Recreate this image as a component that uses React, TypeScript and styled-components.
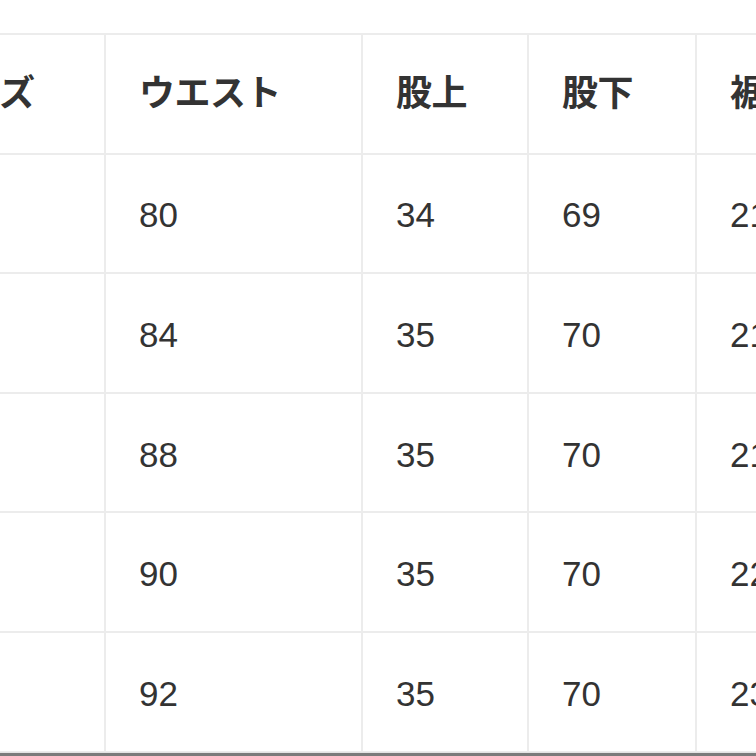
import styled, { createGlobalStyle } from "styled-components";

const GlobalStyle = createGlobalStyle`
  html, body {
    margin: 0;
    padding: 0;
    background: #ffffff;
  }
  body {
    font-family: "Liberation Sans", "Noto Sans CJK JP", sans-serif;
  }
`;

const Page = styled.div`
  width: 756px;
  height: 756px;
  overflow: hidden;
  display: flex;
  flex-direction: column;
  background: #ffffff;
`;

const Viewport = styled.div`
  flex: 1;
  overflow: hidden;
  padding-top: 33px;
`;

const Table = styled.table<{ $width: number }>`
  border-collapse: collapse;
  table-layout: fixed;
  width: ${(p) => p.$width}px;
  margin-left: -106px;
  color: #333333;
`;

const Cell = styled.td<{ $width?: number }>`
  border: 2px solid #ececec;
  height: 119.6px;
  padding: 4px 0 0 33px;
  box-sizing: border-box;
  width: ${(p) => (p.$width ? `${p.$width}px` : "auto")};
  font-size: 35px;
  font-weight: 400;
  white-space: nowrap;
  overflow: hidden;
  vertical-align: middle;
`;

const HeadCell = styled(Cell).attrs({ as: "th" })`
  text-align: left;
  font-family: "Noto Sans CJK JP", sans-serif;
  font-size: 36px;
  font-weight: 700;
  letter-spacing: -0.5px;
  padding-top: 0;
  padding-bottom: 8px;
`;

const BottomBar = styled.div`
  height: 3px;
  border-top: 1px solid #e4e4e4;
  background: #7b7b7b;
  flex-shrink: 0;
`;

const widths = [210, 257, 166, 168, 180];
const headers = ["サイズ", "ウエスト", "股上", "股下", "裾幅"];
const rows = [
  ["S", "80", "34", "69", "21"],
  ["M", "84", "35", "70", "21"],
  ["L", "88", "35", "70", "21"],
  ["XL", "90", "35", "70", "22"],
  ["XXL", "92", "35", "70", "23"],
];

export default function App() {
  const total = widths.reduce((a, b) => a + b, 0);
  return (
    <Page>
      <GlobalStyle />
      <Viewport>
        <Table $width={total}>
          <thead>
            <tr>
              {headers.map((h, i) => (
                <HeadCell key={h} $width={widths[i]}>
                  {h}
                </HeadCell>
              ))}
            </tr>
          </thead>
          <tbody>
            {rows.map((r) => (
              <tr key={r[0]}>
                {r.map((v, i) => (
                  <Cell key={i} $width={widths[i]}>
                    {i === 0 ? "" : v}
                  </Cell>
                ))}
              </tr>
            ))}
          </tbody>
        </Table>
      </Viewport>
      <BottomBar />
    </Page>
  );
}
